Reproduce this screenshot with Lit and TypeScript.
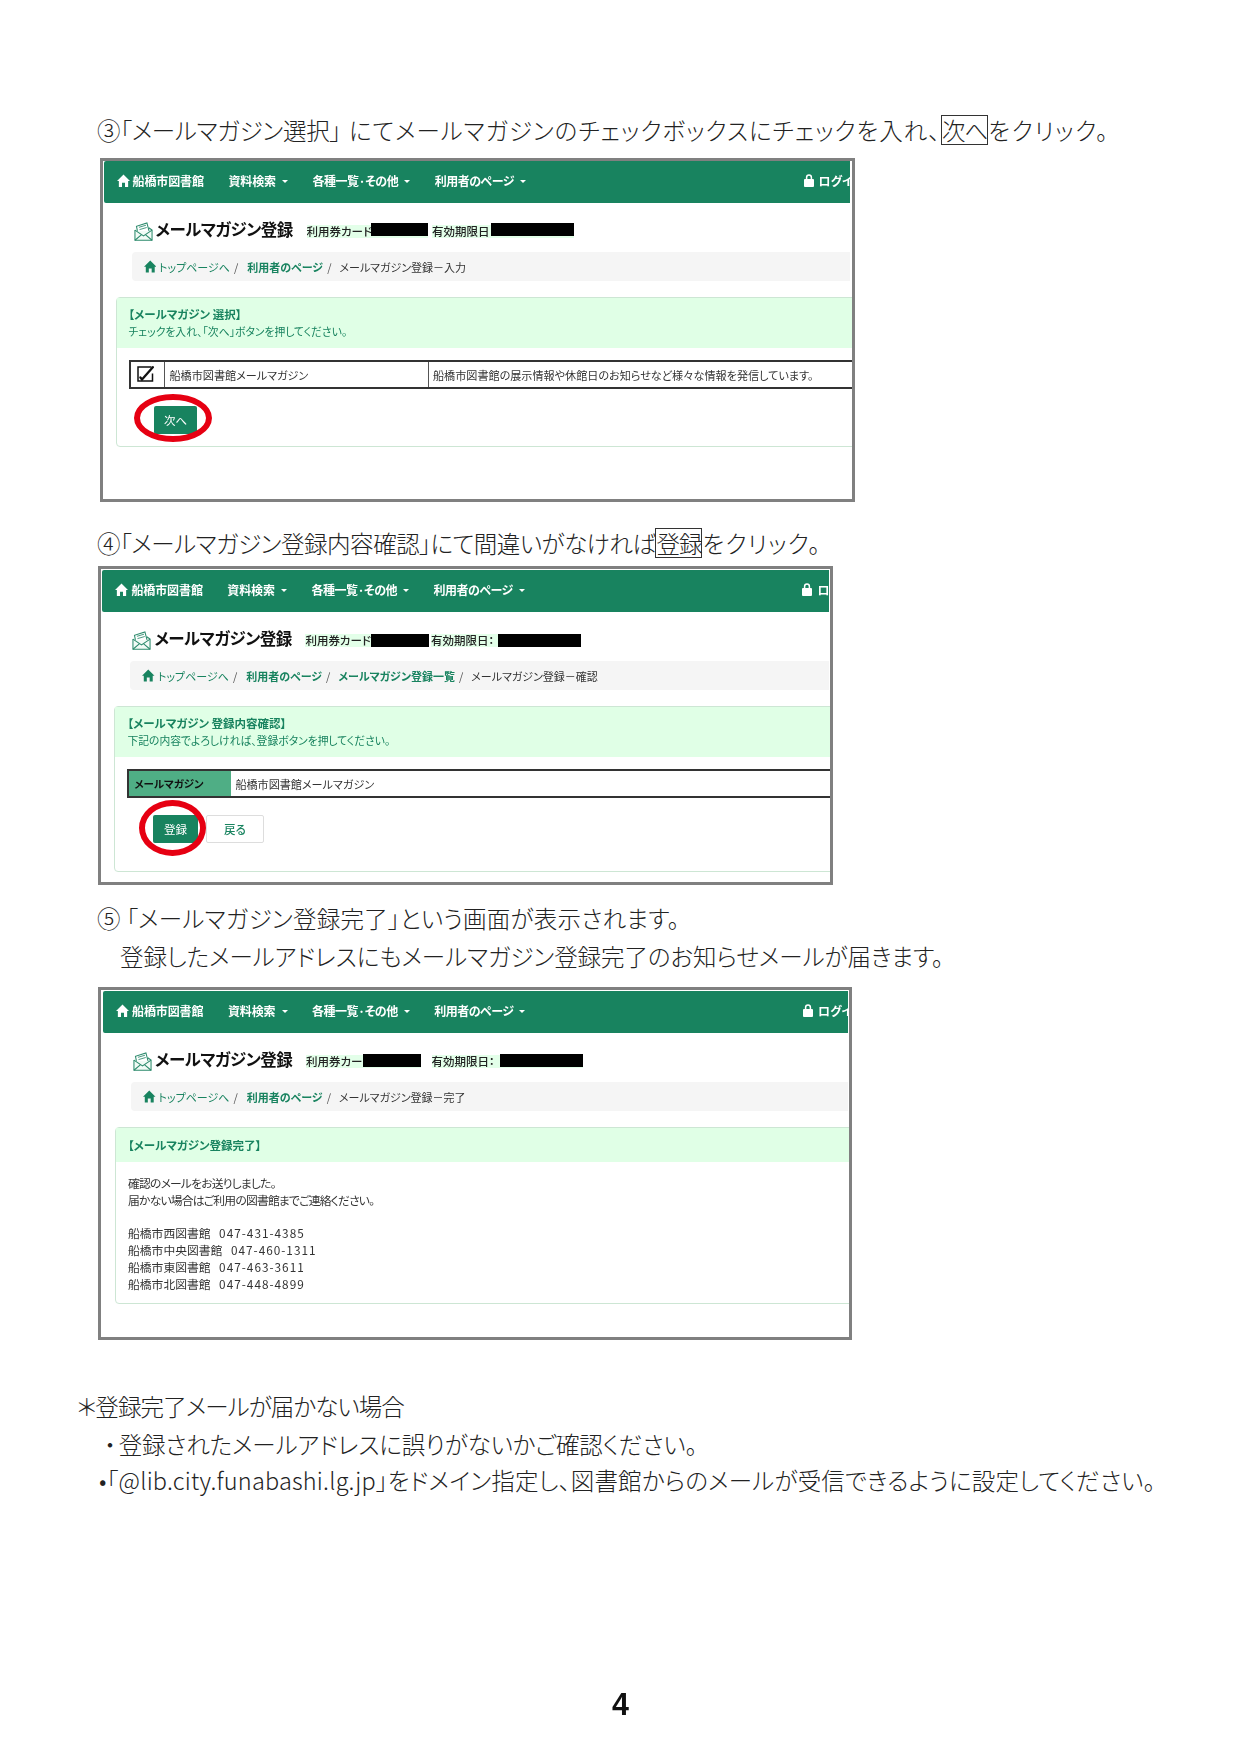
import { LitElement, html, css } from "lit";
import { customElement } from "lit/decorators.js";

const home = () => html`<svg class="home" viewBox="0 0 14 14" aria-hidden="true"><path d="M7 .4 14 7.4 12 7.4 12 13.8 8.6 13.8 8.6 9.2 5.4 9.2 5.4 13.8 2 13.8 2 7.4 0 7.4Z" fill="currentColor"/></svg>`;
const lock = html`<svg class="lock" viewBox="0 0 10 13" aria-hidden="true"><path d="M2.6 5.5V3.4a2.4 2.4 0 0 1 4.8 0V5.5" fill="none" stroke="#fff" stroke-width="1.5"/><rect x="0" y="5" width="10" height="8" rx=".9" fill="#fff"/></svg>`;
const envelope = html`<svg class="env" viewBox="0 0 20 20" aria-hidden="true" fill="#f2fbf6" stroke="#2c8a6c" stroke-width="1.1">
  <path d="M1 8.2 5 5.6V19H1Z" stroke="none"/>
  <path d="M1 8.4V19.2H19V8.4L15.5 6"/>
  <path d="M3.6 9.4 2.6 4.6 13.6 1 15.8 9.4" fill="#fff"/>
  <path d="M5.2 5.6 12.6 3.4M5.8 8 13.4 5.8" stroke-width=".9"/>
  <path d="M1 8.6 10 14.6 19 8.6M1 19.2 8 13.2M19 19.2 12 13.2" fill="none"/>
</svg>`;
const check = html`<svg class="chk" viewBox="0 0 18 16" aria-hidden="true"><path d="M14.5 1H1V15H15.5V7.5" fill="#fff" stroke="#111" stroke-width="1.5"/><path d="M3.4 11.5 5 13.5 15.8 1.2" fill="none" stroke="#111" stroke-width="2.3" stroke-linecap="round"/></svg>`;

interface Frame {
  cls: string;
  card: [number, number];
  exp: [number, number];
  gap: number;
  cardLabel: string;
  expLabel: string;
  crumbs: { t: string; link?: boolean }[];
}

const FRAMES: Record<string, Frame> = {
  a: {
    cls: "fa", card: [64.5, 57], gap: 4, exp: [59, 83],
    cardLabel: "利用券カード:", expLabel: "有効期限日",
    crumbs: [{ t: "利用者のページ", link: true }, { t: "メールマガジン登録－入力" }],
  },
  b: {
    cls: "fb", card: [65.5, 58.5], gap: 1.5, exp: [67, 83.5],
    cardLabel: "利用券カード:", expLabel: "有効期限日：",
    crumbs: [{ t: "利用者のページ", link: true }, { t: "メールマガジン登録一覧", link: true }, { t: "メールマガジン登録－確認" }],
  },
  c: {
    cls: "fc", card: [56.5, 58.5], gap: 10.5, exp: [68.5, 83],
    cardLabel: "利用券カード", expLabel: "有効期限日：",
    crumbs: [{ t: "利用者のページ", link: true }, { t: "メールマガジン登録－完了" }],
  },
};

const LIBS = [
  ["船橋市西図書館", "047-431-4385"],
  ["船橋市中央図書館", "047-460-1311"],
  ["船橋市東図書館", "047-463-3611"],
  ["船橋市北図書館", "047-448-4899"],
];

@customElement("app-root")
export class AppRoot extends LitElement {
  static styles = css`
    :host { display: block; width: 1241px; height: 1755px; background: #fff; overflow: hidden;
      font-family: "Noto Sans CJK JP", "Liberation Sans", sans-serif; color: #222; }
    .page { display: flow-root; padding: 113px 0 0 0; font-feature-settings: "palt"; }
    .line { height: 34px; line-height: 34px; font-size: 23.5px; white-space: nowrap; font-weight: 300; letter-spacing: 0.6px; }
    .l1 { margin-left: 97px; letter-spacing: -.25px; }
    .l1 .sp { margin-left: 8px; letter-spacing: .94px; }
    .l1 .boxed { margin-left: 0; letter-spacing: -1px; }
    .l1 .tail { letter-spacing: 1.6px; }
    .l2 { margin-left: 97px; margin-top: 24px; height: 35px; letter-spacing: -.47px; }
    .l2 .boxed { letter-spacing: -1px; }
    .l2 .tail { letter-spacing: 1.2px; }
    .l3 { margin-left: 97px; margin-top: 16px; height: 35px; letter-spacing: .25px; }
    .l4 { margin-left: 120px; margin-top: 3px; height: 35px; letter-spacing: -.05px; }
    .l5 { margin-left: 77px; margin-top: 49px; letter-spacing: -.9px; }
    .l6 { margin-left: 104px; margin-top: 4px; letter-spacing: -.1px; }
    .l6 .txt { margin-left: 3px; }
    .l7 { margin-left: 99px; margin-top: 2px; letter-spacing: 0.2px; }
    .boxed { display: inline-block; border: 1px solid #333; line-height: 28px; height: 28px; }
    .pagenum { margin-top: 189px; text-align: center; font: bold 32px/36px "Liberation Sans", sans-serif; color: #111; transform: scaleX(.95); }

    .shot { box-sizing: border-box; border: 3px solid #808080; padding: 0 1.5px 0 1px; overflow: hidden; background: #fff; filter: blur(.3px); font-feature-settings: "palt"; }
    .fa { margin: 11px 0 0 99.5px; width: 755px; height: 344px; }
    .fb { margin: 5px 0 0 98.4px; width: 735px; height: 319px; padding-top: 1px; }
    .fc { margin: 13px 0 0 98px; width: 754px; height: 353px; padding-top: 1px; padding-left: 2px; }

    .nav { height: 42px; box-sizing: border-box; padding: 0 0 3px 13px; background: #18835f; color: #fff; display: flex; align-items: center; overflow: hidden; border-radius: 2px 0 0 2px; font-size: 12px; font-weight: 700; white-space: nowrap; }
    .nav-left { width: 687px; flex: none; display: flex; align-items: center; gap: 24.5px; }
    .nav-item { display: flex; align-items: center; letter-spacing: -.1px; }
    .nav-item.tight { letter-spacing: -.5px; }
    .home { width: 13px; height: 13.5px; flex: none; margin-right: 3px; }
    .caret { width: 0; height: 0; border: 3px solid transparent; border-top: 3.5px solid #fff; border-bottom: 0; margin-left: 6px; margin-top: 1px; }
    .lock { width: 10px; height: 13px; margin-right: 5px; flex: none; }

    .title-row { height: 46px; padding: 3px 0 0 30px; display: flex; align-items: center; white-space: nowrap; }
    .env { width: 19px; height: 19px; flex: none; margin-top: 4px; margin-right: 3px; }
    .title { font-size: 16.5px; font-weight: 700; color: #111; width: 139px; letter-spacing: -.5px; margin-right: 12px; }
    .tag { display: flex; height: 13px; background: #e3ffe9; font-size: 11.5px; line-height: 13px; color: #222; font-weight: 500; margin-top: 4px; }
    .tag span { flex: none; overflow: hidden; }
    .ink { background: #000; height: 13px; flex: none; margin-top: -2px; }
    .fb .ink { margin-top: 0; }
    .fc .ink { margin-top: -1px; }
    .bc { margin-left: 28px; height: 29px; padding-left: 12px; background: #f5f5f5; border-radius: 4px 0 0 4px; display: flex; align-items: center; font-size: 11px; color: #333; white-space: nowrap; }
    .bc .home { color: #18835f; margin-right: 3px; width: 12.5px; height: 13px; }
    .bc b { color: #18835f; font-weight: 700; }
    .bc i { font-style: normal; margin: 0 5px 0 4px; color: #555; }
    .bc .first { color: #18835f; }
    .bc b + i { margin-right: 8px; }
    .bc .first + i { margin-right: 9px; }

    .panel { margin: 16px -10px 0 12px; border: 1px solid #cde6d4; border-radius: 4px; background: #fff; }
    .fa .panel { padding-bottom: 12px; }
    .fb .panel { padding-bottom: 28px; }
    .phead { background: #e0ffe6; padding: 8px 0 0 12px; height: 42px; color: #18835f; font-size: 11.5px; line-height: 17px; white-space: nowrap; }
    .fc .phead { padding-top: 9px; height: 25px; }
    .phead b { display: block; font-weight: 700; }
    .phead span { display: block; font-size: 10.8px; }

    .tbl { margin: 12px 0 0 12px; height: 29px; box-sizing: border-box; border: solid #333; border-width: 2.5px 0 2.5px 2.5px; display: flex; font-size: 11.1px; line-height: 24px; white-space: nowrap; color: #333; }
    .c { display: flex; align-items: center; border-right: 1px solid #555; padding-left: 4.5px; box-sizing: border-box; flex: none; }
    .c0 { width: 34.5px; padding-left: 6px; }
    .c1 { width: 263.5px; }
    .c2 { flex: 1; border-right: 0; }
    .clabel { width: 101.5px; padding-left: 5px; background: #4fae85; color: #111; font-weight: 700; border-right: 0; font-size: 10.5px; }
    .chk { width: 18px; height: 16px; margin-top: -2px; }

    .btns { margin: 17px 0 0 37.5px; display: flex; gap: 8px; }
    .btn { position: relative; height: 28px; border-radius: 2px; background: #18835f; color: #fff; font-size: 11.5px; display: flex; align-items: center; justify-content: center; }
    .fa .btn { width: 43px; }
    .fb .btn { width: 45px; }
    .btn.back { width: 58px; background: #fff; border: 1px solid #ddd; box-sizing: border-box; color: #18835f; font-weight: 500; }
    .ring { position: absolute; box-sizing: border-box; border: 6px solid #e60012; border-radius: 50%; }
    .fa .ring { left: -20px; top: -12px; width: 78px; height: 48px; }
    .fb .ring { left: -13.5px; top: -15px; width: 66.5px; height: 56px; }

    .pbody { padding: 13px 0 10px 12px; font-size: 11.8px; line-height: 16.8px; color: #333; white-space: pre; }
    .msg { display: block; letter-spacing: -.8px; }
    .num { letter-spacing: 1px; margin-left: 8.5px; }
  `;

  private nav() {
    return html`<div class="nav">
      <div class="nav-left">
        <span class="nav-item">${home()}船橋市図書館</span>
        <span class="nav-item">資料検索<span class="caret"></span></span>
        <span class="nav-item tight">各種一覧·その他<span class="caret"></span></span>
        <span class="nav-item tight">利用者のページ<span class="caret"></span></span>
      </div>
      ${lock}<span>ログイン</span>
    </div>`;
  }

  private head(f: Frame) {
    return html`<div class="title-row">
        ${envelope}<span class="title">メールマガジン登録</span>
        <div class="tag"><span style="width:${f.card[0]}px">${f.cardLabel}</span><div class="ink" style="width:${f.card[1]}px"></div></div>
        <div style="width:${f.gap}px;flex:none"></div>
        <div class="tag"><span style="width:${f.exp[0]}px">${f.expLabel}</span><div class="ink" style="width:${f.exp[1]}px"></div></div>
      </div>
      <div class="bc">${home()}<span class="first">トップページへ</span><i>/</i>${f.crumbs.map((c) => c.link ? html`<b>${c.t}</b><i>/</i>` : html`<span>${c.t}</span>`)}</div>`;
  }

  render() {
    const { a, b, c } = FRAMES;
    return html`<div class="page">
      <div class="line l1">③「メールマガジン選択」<span class="sp">にてメールマガジンのチェックボックスにチェックを入れ、</span><span class="boxed">次へ</span><span class="tail">をクリック。</span></div>

      <section class="shot ${a.cls}">
        ${this.nav()}${this.head(a)}
        <div class="panel">
          <div class="phead"><b>【メールマガジン 選択】</b><span>チェックを入れ、「次へ」ボタンを押してください。</span></div>
          <div class="tbl">
            <div class="c c0">${check}</div>
            <div class="c c1">船橋市図書館メールマガジン</div>
            <div class="c c2">船橋市図書館の展示情報や休館日のお知らせなど様々な情報を発信しています。</div>
          </div>
          <div class="btns"><div class="btn">次へ<div class="ring"></div></div></div>
        </div>
      </section>

      <div class="line l2">④「メールマガジン登録内容確認」にて間違いがなければ<span class="boxed">登録</span><span class="tail">をクリック。</span></div>

      <section class="shot ${b.cls}">
        ${this.nav()}${this.head(b)}
        <div class="panel">
          <div class="phead"><b>【メールマガジン 登録内容確認】</b><span>下記の内容でよろしければ、登録ボタンを押してください。</span></div>
          <div class="tbl">
            <div class="c clabel">メールマガジン</div>
            <div class="c c2">船橋市図書館メールマガジン</div>
          </div>
          <div class="btns"><div class="btn">登録<div class="ring"></div></div><div class="btn back">戻る</div></div>
        </div>
      </section>

      <div class="line l3">⑤ 「メールマガジン登録完了」という画面が表示されます。</div>
      <div class="line l4">登録したメールアドレスにもメールマガジン登録完了のお知らせメールが届きます。</div>

      <section class="shot ${c.cls}">
        ${this.nav()}${this.head(c)}
        <div class="panel">
          <div class="phead"><b>【メールマガジン登録完了】</b></div>
          <div class="pbody"><span class="msg">確認のメールをお送りしました。</span><span class="msg">届かない場合はご利用の図書館までご連絡ください。</span>
${LIBS.map(([n, t]) => html`<div>${n}<span class="num">${t}</span></div>`)}</div>
        </div>
      </section>

      <div class="line l5">＊登録完了メールが届かない場合</div>
      <div class="line l6">・<span class="txt">登録されたメールアドレスに誤りがないかご確認ください。</span></div>
      <div class="line l7">•「@lib.city.funabashi.lg.jp」をドメイン指定し、図書館からのメールが受信できるように設定してください。</div>
      <div class="pagenum">4</div>
    </div>`;
  }
}
